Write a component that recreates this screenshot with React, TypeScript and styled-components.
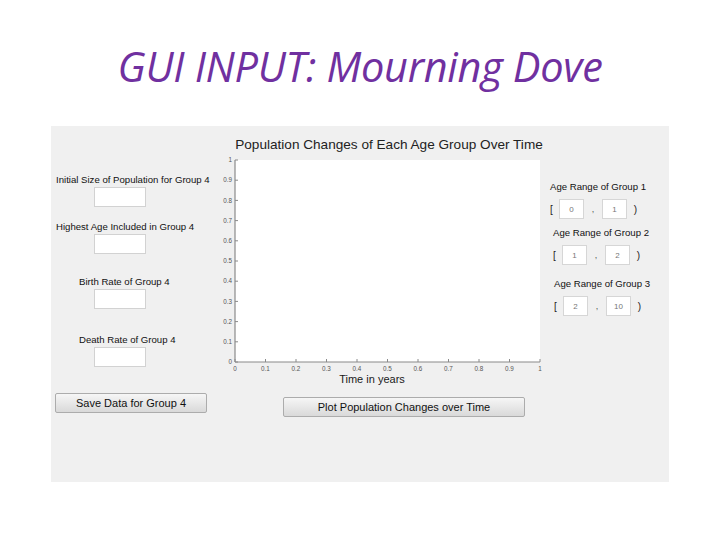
import React from "react";
import styled, { createGlobalStyle } from "styled-components";

const GlobalStyle = createGlobalStyle`
  html, body {
    margin: 0;
    padding: 0;
    background: #ffffff;
  }
`;

const Page = styled.div`
  width: 720px;
  height: 540px;
  display: flex;
  flex-direction: column;
  align-items: center;
  background: #ffffff;
  overflow: hidden;
`;

const SlideTitle = styled.h1`
  margin: 40px 0 0;
  height: 86px;
  font-family: "Open Sans", "Noto Sans", sans-serif;
  font-style: italic;
  font-weight: 400;
  font-size: 41.5px;
  line-height: 52px;
  color: #7030a0;
  letter-spacing: -0.3px;
  white-space: nowrap;
`;

const Figure = styled.div`
  width: 618px;
  height: 356px;
  background: #f0f0f0;
  display: flex;
  font-family: "Liberation Sans", Arial, sans-serif;
  color: #111;
`;

/* left column: group 4 inputs */
const LeftColumn = styled.div`
  width: 164px;
  padding-top: 48px;
  display: flex;
  flex-direction: column;
`;

const Field = styled.div<{ $gap: number }>`
  margin-top: ${(p) => p.$gap}px;
  display: flex;
  flex-direction: column;
`;

const FieldLabel = styled.label<{ $indent: number }>`
  margin-left: ${(p) => p.$indent}px;
  font-size: 9.6px;
  line-height: 12px;
  white-space: nowrap;
`;

const FieldBox = styled.input`
  box-sizing: border-box;
  margin: 1px 0 0 43px;
  width: 52px;
  height: 20px;
  padding: 0;
  border: 1px solid #d2d2d2;
  background: #ffffff;
  outline: none;
  font: 8px "Liberation Sans", Arial, sans-serif;
  color: #777;
  text-align: center;
`;

const Spacer = styled.div<{ $h: number }>`
  height: ${(p) => p.$h}px;
  flex: none;
`;

const PushButton = styled.button<{ $width: number; $shift: number }>`
  box-sizing: border-box;
  width: ${(p) => p.$width}px;
  height: 20px;
  margin-left: ${(p) => p.$shift}px;
  padding: 0;
  border: 1px solid #acacac;
  border-radius: 2px;
  background: linear-gradient(#f6f6f6, #e6e6e6 55%, #d9d9d9);
  font: 11px "Liberation Sans", Arial, sans-serif;
  color: #111;
`;

/* centre column: axes */
const CenterColumn = styled.div`
  width: 330px;
  display: flex;
  flex-direction: column;
`;

const ChartTitle = styled.div`
  margin: 10px 0 0 19px;
  width: 310px;
  text-align: center;
  font-size: 13.6px;
  line-height: 17px;
  color: #222;
  white-space: nowrap;
`;

const AxisLabel = styled.div`
  margin: 0 0 0 117px;
  width: 80px;
  text-align: center;
  font-size: 11px;
  line-height: 13px;
  color: #1a1a1a;
`;

/* right column: age ranges */
const RightColumn = styled.div`
  flex: 1;
  padding-top: 55px;
  display: flex;
  flex-direction: column;
`;

const RangeGroup = styled.div<{ $indent: number; $gap: number }>`
  margin: ${(p) => p.$gap}px 0 0 ${(p) => p.$indent}px;
  display: flex;
  flex-direction: column;
`;

const RangeLabel = styled.div`
  font-size: 9.6px;
  line-height: 12px;
  white-space: nowrap;
`;

const RangeRow = styled.div`
  margin-top: 6px;
  display: flex;
  align-items: center;
  height: 20px;
`;

const Bracket = styled.span<{ $w: number; $align: "left" | "right" }>`
  width: ${(p) => p.$w}px;
  text-align: ${(p) => p.$align};
  font-size: 10px;
  color: #222;
`;

const Comma = styled.span`
  width: 18px;
  text-align: center;
  font-size: 9px;
  color: #555;
`;

const RangeBox = styled.input`
  box-sizing: border-box;
  width: 25px;
  height: 20px;
  padding: 0;
  border: 1px solid #d6d6d6;
  background: #ffffff;
  outline: none;
  font: 8px "Liberation Sans", Arial, sans-serif;
  color: #777;
  text-align: center;
`;

const PlotSvg = styled.svg`
  display: block;
  margin-top: 2px;
`;

const ticks = Array.from({ length: 11 }, (_, i) => i / 10);

const fmt = (v: number) => (v === 0 ? "0" : v === 1 ? "1" : v.toFixed(1));

const Axes = () => {
  const left = 20;
  const top = 5;
  const w = 305;
  const h = 202;
  const axis = "#8a8a8a";
  const font = "Liberation Sans, Arial, sans-serif";
  return (
    <PlotSvg width={330} height={218}>
      <rect x={left} y={top} width={w} height={h} fill="#ffffff" />
      <line x1={left} y1={top} x2={left} y2={top + h} stroke={axis} strokeWidth={1.2} />
      <line x1={left} y1={top + h} x2={left + w} y2={top + h} stroke={axis} strokeWidth={1.2} />
      {ticks.map((v) => {
        const y = top + h - v * h;
        return (
          <g key={"y" + v}>
            <line x1={left} y1={y} x2={left + 3} y2={y} stroke={axis} />
            <text x={left - 3} y={y + 2.2} fontSize={6.3} fill="#555" textAnchor="end" fontFamily={font}>
              {fmt(v)}
            </text>
          </g>
        );
      })}
      {ticks.map((v) => {
        const x = left + v * w;
        return (
          <g key={"x" + v}>
            <line x1={x} y1={top + h} x2={x} y2={top + h - 3} stroke={axis} />
            <text x={x} y={top + h + 9} fontSize={6.3} fill="#555" textAnchor="middle" fontFamily={font}>
              {fmt(v)}
            </text>
          </g>
        );
      })}
    </PlotSvg>
  );
};

type RangeProps = { label: string; from: string; to: string; indent: number; gap: number };

const AgeRange = ({ label, from, to, indent, gap }: RangeProps) => (
  <RangeGroup $indent={indent} $gap={gap}>
    <RangeLabel>{label}</RangeLabel>
    <RangeRow>
      <Bracket $w={9} $align="left">[</Bracket>
      <RangeBox defaultValue={from} />
      <Comma>,</Comma>
      <RangeBox defaultValue={to} />
      <Bracket $w={10} $align="right">)</Bracket>
    </RangeRow>
  </RangeGroup>
);

export default function App() {
  return (
    <Page>
      <GlobalStyle />
      <SlideTitle>GUI INPUT: Mourning Dove</SlideTitle>
      <Figure>
        <LeftColumn>
          <Field $gap={0}>
            <FieldLabel $indent={5}>Initial Size of Population for Group 4</FieldLabel>
            <FieldBox />
          </Field>
          <Field $gap={14}>
            <FieldLabel $indent={5}>Highest Age Included in Group 4</FieldLabel>
            <FieldBox />
          </Field>
          <Field $gap={22}>
            <FieldLabel $indent={28}>Birth Rate of Group 4</FieldLabel>
            <FieldBox />
          </Field>
          <Field $gap={25}>
            <FieldLabel $indent={28}>Death Rate of Group 4</FieldLabel>
            <FieldBox />
          </Field>
          <Spacer $h={26} />
          <PushButton $width={152} $shift={4}>Save Data for Group 4</PushButton>
        </LeftColumn>
        <CenterColumn>
          <ChartTitle>Population Changes of Each Age Group Over Time</ChartTitle>
          <Axes />
          <AxisLabel>Time in years</AxisLabel>
          <Spacer $h={11} />
          <PushButton $width={242} $shift={68}>Plot Population Changes over Time</PushButton>
        </CenterColumn>
        <RightColumn>
          <AgeRange label="Age Range of Group 1" from="0" to="1" indent={5} gap={0} />
          <AgeRange label="Age Range of Group 2" from="1" to="2" indent={8} gap={8} />
          <AgeRange label="Age Range of Group 3" from="2" to="10" indent={9} gap={13} />
        </RightColumn>
      </Figure>
    </Page>
  );
}
